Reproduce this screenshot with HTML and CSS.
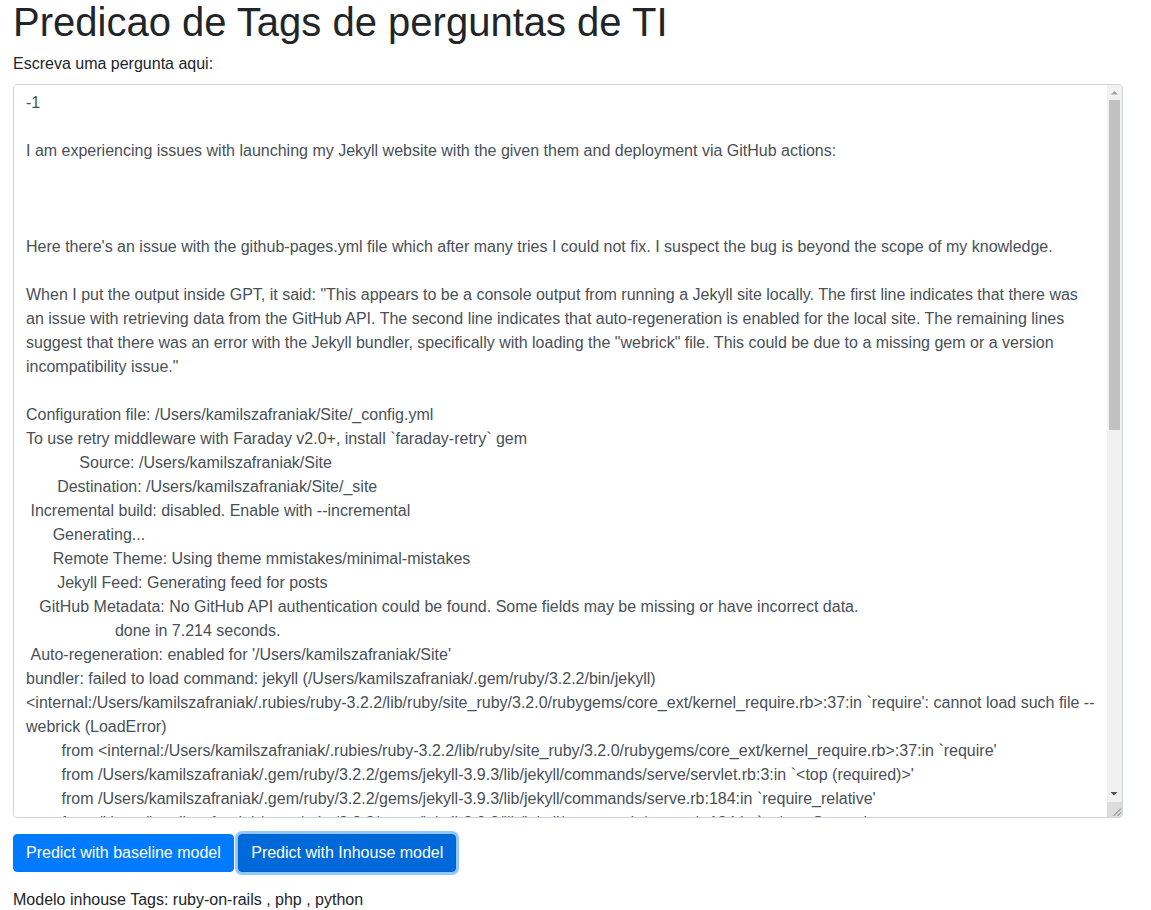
FILE: index.html
```html
<!DOCTYPE html>
<html lang="pt">
<head>
<meta charset="utf-8">
<title>Predicao de Tags de perguntas de TI</title>
<link rel="stylesheet" href="styles.css">
</head>
<body>
<div class="container">
<h1 class="title">Predicao de Tags de perguntas de TI</h1>
<form class="form">
<label class="label" for="q">Escreva uma pergunta aqui:</label>
<div class="field">
<textarea id="q" class="question">-1

I am experiencing issues with launching my Jekyll website with the given them and deployment via GitHub actions:



Here there's an issue with the github-pages.yml file which after many tries I could not fix. I suspect the bug is beyond the scope of my knowledge.

When I put the output inside GPT, it said: "This appears to be a console output from running a Jekyll site locally. The first line indicates that there was an issue with retrieving data from the GitHub API. The second line indicates that auto-regeneration is enabled for the local site. The remaining lines suggest that there was an error with the Jekyll bundler, specifically with loading the "webrick" file. This could be due to a missing gem or a version incompatibility issue."

Configuration file: /Users/kamilszafraniak/Site/_config.yml
To use retry middleware with Faraday v2.0+, install `faraday-retry` gem
            Source: /Users/kamilszafraniak/Site
       Destination: /Users/kamilszafraniak/Site/_site
 Incremental build: disabled. Enable with --incremental
      Generating...
      Remote Theme: Using theme mmistakes/minimal-mistakes
       Jekyll Feed: Generating feed for posts
   GitHub Metadata: No GitHub API authentication could be found. Some fields may be missing or have incorrect data.
                    done in 7.214 seconds.
 Auto-regeneration: enabled for '/Users/kamilszafraniak/Site'
bundler: failed to load command: jekyll (/Users/kamilszafraniak/.gem/ruby/3.2.2/bin/jekyll)
&lt;internal:/Users/kamilszafraniak/.rubies/ruby-3.2.2/lib/ruby/site_ruby/3.2.0/rubygems/core_ext/kernel_require.rb&gt;:37:in `require': cannot load such file -- webrick (LoadError)
        from &lt;internal:/Users/kamilszafraniak/.rubies/ruby-3.2.2/lib/ruby/site_ruby/3.2.0/rubygems/core_ext/kernel_require.rb&gt;:37:in `require'
        from /Users/kamilszafraniak/.gem/ruby/3.2.2/gems/jekyll-3.9.3/lib/jekyll/commands/serve/servlet.rb:3:in `&lt;top (required)&gt;'
        from /Users/kamilszafraniak/.gem/ruby/3.2.2/gems/jekyll-3.9.3/lib/jekyll/commands/serve.rb:184:in `require_relative'
        from /Users/kamilszafraniak/.gem/ruby/3.2.2/gems/jekyll-3.9.3/lib/jekyll/commands/serve.rb:184:in `&lt;class:Serve&gt;'
        from /Users/kamilszafraniak/.gem/ruby/3.2.2/gems/jekyll-3.9.3/lib/jekyll/commands/serve.rb:5:in `&lt;module:Commands&gt;'
        from /Users/kamilszafraniak/.gem/ruby/3.2.2/gems/jekyll-3.9.3/lib/jekyll/commands/serve.rb:4:in `&lt;module:Jekyll&gt;'
        from /Users/kamilszafraniak/.gem/ruby/3.2.2/gems/jekyll-3.9.3/lib/jekyll/commands/serve.rb:3:in `&lt;top (required)&gt;'
        from /Users/kamilszafraniak/.gem/ruby/3.2.2/gems/jekyll-3.9.3/lib/jekyll.rb:13:in `require'
        from /Users/kamilszafraniak/.gem/ruby/3.2.2/gems/jekyll-3.9.3/lib/jekyll.rb:13:in `block in require_all'
        from /Users/kamilszafraniak/.gem/ruby/3.2.2/gems/jekyll-3.9.3/lib/jekyll.rb:12:in `each'
        from /Users/kamilszafraniak/.gem/ruby/3.2.2/gems/jekyll-3.9.3/lib/jekyll.rb:12:in `require_all'
        from /Users/kamilszafraniak/.gem/ruby/3.2.2/gems/jekyll-3.9.3/lib/jekyll.rb:196:in `&lt;top (required)&gt;'
        from /Users/kamilszafraniak/.gem/ruby/3.2.2/gems/jekyll-3.9.3/exe/jekyll:8:in `require'
        from /Users/kamilszafraniak/.gem/ruby/3.2.2/gems/jekyll-3.9.3/exe/jekyll:8:in `&lt;top (required)&gt;'
        from /Users/kamilszafraniak/.gem/ruby/3.2.2/bin/jekyll:25:in `load'
        from /Users/kamilszafraniak/.gem/ruby/3.2.2/bin/jekyll:25:in `&lt;top (required)&gt;'

I have tried adding webrick to the Gemfile and running bundle install again, but the error persists when I run bundle exec jekyll serve.

Any help would be appreciated.</textarea>
<div class="scrollbar" aria-hidden="true">
<div class="sb-btn">
<svg class="sb-icon" width="15" height="15" viewBox="0 0 15 15"><polygon points="4,9.5 11,9.5 7.5,6" fill="#a3a3a3"/></svg>
</div>
<div class="sb-track"><div class="sb-thumb"></div></div>
<div class="sb-btn">
<svg class="sb-icon" width="15" height="15" viewBox="0 0 15 15"><polygon points="3.5,5 10.5,5 7,8.5" fill="#505050"/></svg>
</div>
<div class="sb-resizer">
<svg class="sb-icon" width="15" height="15" viewBox="0 0 15 15"><path d="M14 6.5 L6.5 14 M14 10.5 L10.5 14" stroke="#6e6e6e" stroke-width="1" fill="none"/></svg>
</div>
</div>
</div>
<div class="actions">
<button type="button" class="btn btn-primary">Predict with baseline model</button>
<button type="button" class="btn btn-primary btn-focus">Predict with Inhouse model</button>
</div>
</form>
<p class="result">Modelo inhouse Tags: ruby-on-rails , php , python</p>
</div>
</body>
</html>
```

FILE: styles.css
```css
html, body {
  margin: 0;
  padding: 0;
  background: #fff;
}

body {
  font-family: "Liberation Sans", Arial, sans-serif;
  font-size: 16px;
  line-height: 1.5;
  color: #212529;
}

.container {
  width: 1110px;
  padding-left: 13px;
}

.title {
  margin: 0 0 8px;
  font-size: 40px;
  font-weight: 400;
  line-height: 1.1;
  color: #212529;
}

.form {
  margin: 0;
}

.label {
  display: inline-block;
  margin-bottom: 8px;
}

.field {
  display: flex;
  box-sizing: border-box;
  width: 1110px;
  height: 734px;
  border: 1px solid #ced4da;
  border-radius: 4px;
  overflow: hidden;
  background: #fff;
}

.question {
  display: block;
  box-sizing: border-box;
  width: 1093px;
  height: 100%;
  margin: 0;
  padding: 6px 12px;
  font-family: "Liberation Sans", Arial, sans-serif;
  font-size: 16px;
  line-height: 1.5;
  color: #495057;
  background: #fff;
  border: 0;
  overflow: hidden;
  resize: none;
  outline: none;
}

.scrollbar {
  display: flex;
  flex-direction: column;
  width: 15px;
  flex: 0 0 15px;
  background: #f1f1f1;
}

.sb-btn {
  height: 15px;
  flex: 0 0 15px;
}

.sb-icon {
  display: block;
}

.sb-track {
  flex: 1 1 auto;
  padding: 0 2px;
}

.sb-thumb {
  height: 330px;
  background: #c1c1c1;
}

.sb-resizer {
  height: 15px;
  flex: 0 0 15px;
  background: #dcdcdc;
}

.actions {
  margin-top: 16px;
}

.btn {
  display: inline-block;
  box-sizing: border-box;
  height: 38px;
  padding: 6px 12px;
  font-family: "Liberation Sans", Arial, sans-serif;
  font-size: 16px;
  line-height: 1.5;
  font-weight: 400;
  text-align: center;
  vertical-align: middle;
  border: 1px solid transparent;
  border-radius: 4px;
  cursor: pointer;
}

.btn-primary {
  color: #fff;
  background-color: #007bff;
  border-color: #007bff;
}

.btn-focus {
  background-color: #0069d9;
  border-color: #0062cc;
  box-shadow: 0 0 0 3px rgba(38, 143, 255, 0.5);
}

.result {
  margin: 16px 0 0;
}
```
